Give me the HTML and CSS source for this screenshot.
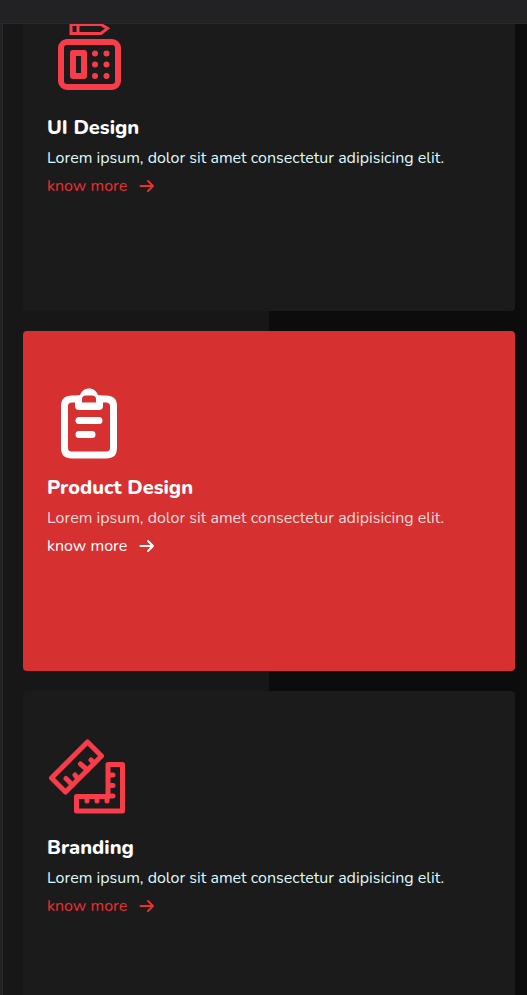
FILE: index.html
```html
<!DOCTYPE html>
<html lang="en">
<head>
<meta charset="utf-8">
<meta name="viewport" content="width=device-width, initial-scale=1">
<title>Services</title>
<link rel="stylesheet" href="styles.css">
</head>
<body>
<header class="topbar"></header>
<main class="services">
  <div class="service-list">
    <article class="card">
      <svg class="card-icon" viewBox="0 0 90 90" fill="none" stroke="currentColor" aria-hidden="true">
        <path d="M24 4V17.500H54L60.500 12.500L54 8.500H24M31 8V17" stroke-width="3"/>
        <rect x="14" y="26" width="57" height="45" rx="6" stroke-width="6"/>
        <rect x="26" y="37" width="11" height="23" stroke-width="6" stroke-linejoin="round"/>
        <g fill="currentColor" stroke="none">
          <circle cx="48" cy="37.500" r="3"/><circle cx="59.500" cy="37.500" r="3"/>
          <circle cx="48" cy="48.500" r="3"/><circle cx="59.500" cy="48.500" r="3"/>
          <circle cx="48" cy="60" r="3"/><circle cx="59.500" cy="60" r="3"/>
        </g>
      </svg>
      <h3 class="card-title">UI Design</h3>
      <p class="card-text">Lorem ipsum, dolor sit amet consectetur adipisicing elit.</p>
      <a class="card-link" href="#">know more
        <svg class="arrow" viewBox="0 0 16 14" aria-hidden="true"><path d="M1.500 7H14M9 2L14 7L9 12"/></svg>
      </a>
    </article>
    <article class="card card-active">
      <svg class="card-icon" viewBox="0 0 90 90" fill="none" stroke="currentColor" stroke-width="7" stroke-linecap="round" stroke-linejoin="round" aria-hidden="true">
        <path d="M30 23H25Q17.500 23 17.500 30V72Q17.500 79 25 79H59Q66.500 79 66.500 72V30Q66.500 23 59 23H54"/>
        <path fill="currentColor" stroke="none" fill-rule="evenodd" d="M28 23Q28 19 33 19C35 14.500 38 12.500 42 12.500S49 14.500 51 19Q56 19 56 23V30Q56 34 52 34H32Q28 34 28 30ZM35 26.500H49V23Q49 19.500 45 19.500H39Q35 19.500 35 23Z"/>
        <path d="M32 44.500H52M32 58.500H45"/>
      </svg>
      <h3 class="card-title">Product Design</h3>
      <p class="card-text">Lorem ipsum, dolor sit amet consectetur adipisicing elit.</p>
      <a class="card-link" href="#">know more
        <svg class="arrow" viewBox="0 0 16 14" aria-hidden="true"><path d="M1.500 7H14M9 2L14 7L9 12"/></svg>
      </a>
    </article>
    <article class="card">
      <svg class="card-icon" viewBox="0 0 90 90" fill="none" stroke="currentColor" stroke-width="5" stroke-linecap="round" stroke-linejoin="round" aria-hidden="true">
        <path d="M40.500 6L54.500 20L18.500 56L4.500 42Z"/>
        <path d="M19 42.500L25.500 49M28 39L31 43M33.500 28L40.500 34M44 24L47 27"/>
        <path d="M61 28.500H75.500V75H29.500V60.500H61Z"/>
        <path d="M63 39H66M63 49.500H66M63 60H66M40 62V65M50 62V65M60 62V65"/>
      </svg>
      <h3 class="card-title">Branding</h3>
      <p class="card-text">Lorem ipsum, dolor sit amet consectetur adipisicing elit.</p>
      <a class="card-link" href="#">know more
        <svg class="arrow" viewBox="0 0 16 14" aria-hidden="true"><path d="M1.500 7H14M9 2L14 7L9 12"/></svg>
      </a>
    </article>
  </div>
</main>
</body>
</html>
```
FILE: styles.css
```css
* { box-sizing: border-box; }

body {
  margin: 0;
  height: 100vh;
  overflow: hidden;
  display: flex;
  flex-direction: column;
  background: #222224;
  color: #fff;
  font-family: Nunito, "Open Sans", "Noto Sans", sans-serif;
}

.topbar {
  flex: none;
  height: 24px;
  background: #222224;
  border-bottom: 1px solid #2a2a2c;
}

.services {
  flex: 1;
  min-height: 0;
  overflow: hidden;
  margin-left: 2px;
  padding: 0 12px 0 20px;
  border-left: 1px solid #29292c;
  background: linear-gradient(to right, #171717 calc(50% + 4px), #0c0c0c calc(50% + 4px));
}

/* The list is scrolled partway past its first card's top edge. */
.service-list {
  display: grid;
  gap: 20px;
  margin-top: -53px;
}

.card {
  display: flex;
  flex-direction: column;
  align-items: flex-start;
  min-height: 340px;
  padding: 45px 24px;
  border-radius: 4px;
  background: #1b1b1b;
}

.card-active { background: #d63031; }

.card-icon {
  width: 90px;
  height: 90px;
  margin-bottom: 8px;
  color: #f83d4a;
}

.card-title {
  margin: 0 0 2px;
  font-size: 20px;
  line-height: 28px;
  font-weight: 800;
}

.card-text {
  margin: 0;
  font-size: 16px;
  line-height: 28px;
  color: #dff9fb;
}

.card-link {
  display: inline-flex;
  align-items: center;
  gap: 12px;
  font-size: 16px;
  line-height: 28px;
  color: #eb2f2f;
  text-decoration: none;
}

.card-active .card-icon,
.card-active .card-link { color: #fff; }

.card-active .card-text { color: #eadada; }

.arrow {
  width: 16px;
  height: 14px;
  fill: none;
  stroke: currentColor;
  stroke-width: 2;
  stroke-linecap: round;
  stroke-linejoin: round;
}
```
